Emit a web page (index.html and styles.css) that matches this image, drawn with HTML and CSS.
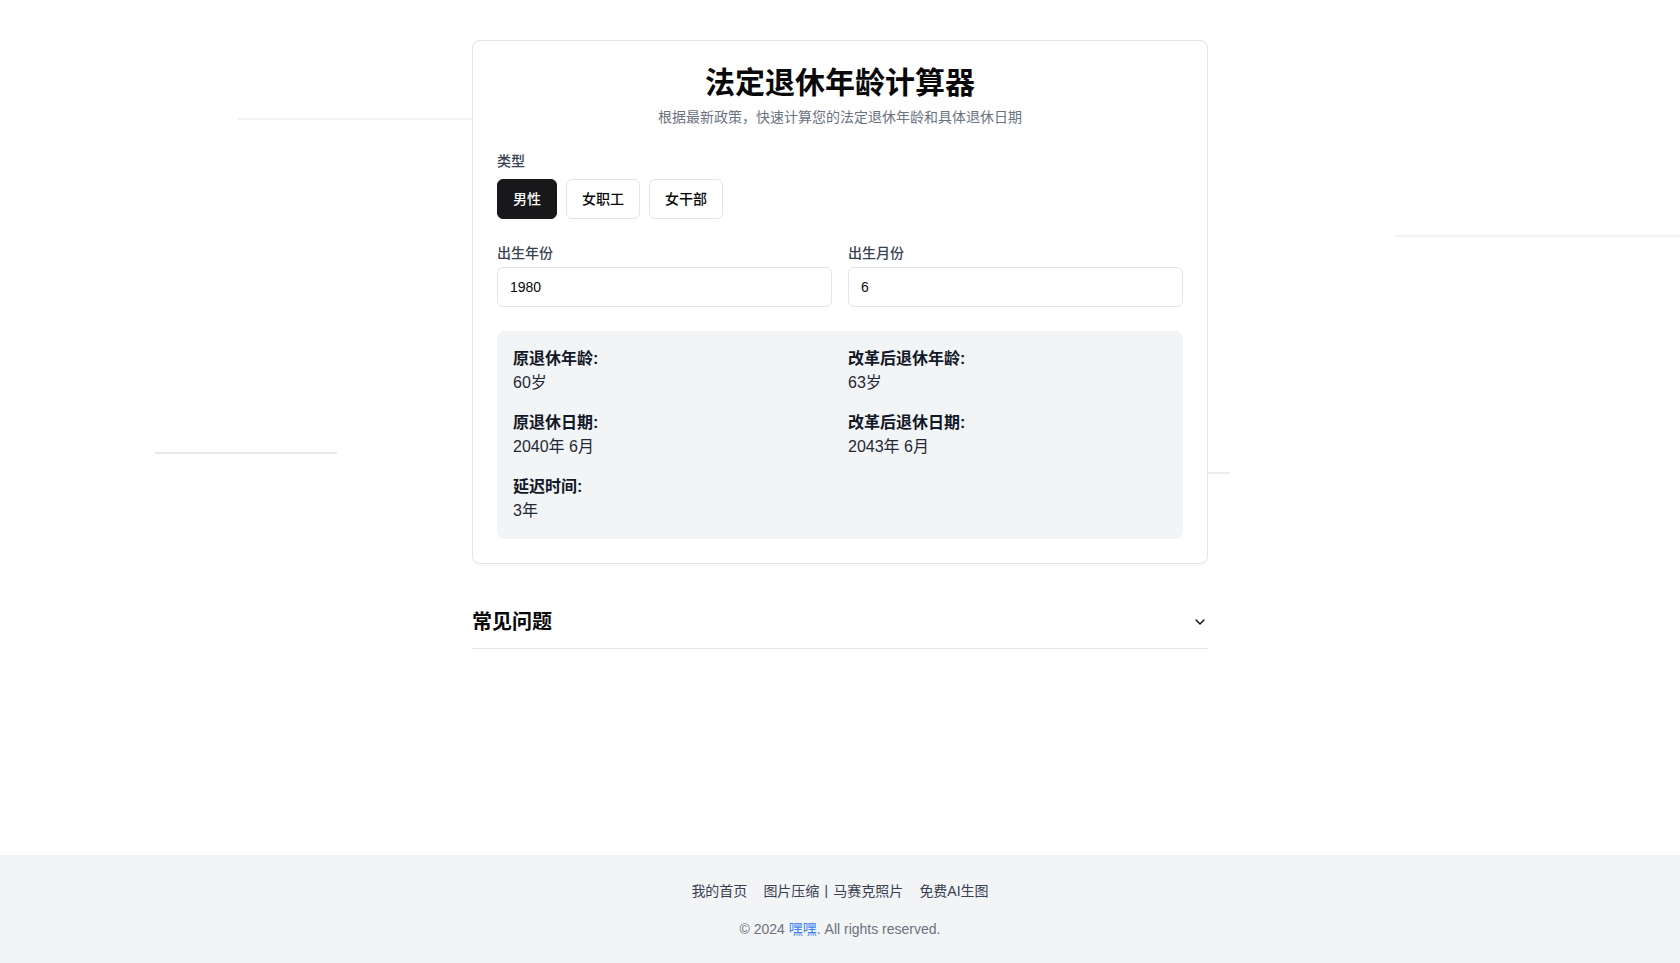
FILE: index.html
```html
<!DOCTYPE html>
<html lang="zh-CN">
<head>
<meta charset="utf-8">
<title>法定退休年龄计算器</title>
<link rel="stylesheet" href="styles.css">
</head>
<body>
<div class="bg-lines" aria-hidden="true">
  <span class="line l1"></span>
  <span class="line l2"></span>
  <span class="line l3"></span>
  <span class="line l4"></span>
</div>
<main class="main">
  <div class="container">
    <section class="card">
      <h1 class="title">法定退休年龄计算器</h1>
      <p class="subtitle">根据最新政策，快速计算您的法定退休年龄和具体退休日期</p>

      <div class="field type-field">
        <label class="label type-label">类型</label>
        <div class="btn-group">
          <button class="btn active">男性</button>
          <button class="btn">女职工</button>
          <button class="btn">女干部</button>
        </div>
      </div>

      <div class="field-row">
        <div class="field">
          <label class="label input-label">出生年份</label>
          <input class="input" type="text" value="1980">
        </div>
        <div class="field">
          <label class="label input-label">出生月份</label>
          <input class="input" type="text" value="6">
        </div>
      </div>

      <div class="result">
        <div class="result-item">
          <div class="r-label">原退休年龄:</div>
          <div class="r-value">60岁</div>
        </div>
        <div class="result-item">
          <div class="r-label">改革后退休年龄:</div>
          <div class="r-value">63岁</div>
        </div>
        <div class="result-item">
          <div class="r-label">原退休日期:</div>
          <div class="r-value">2040年 6月</div>
        </div>
        <div class="result-item">
          <div class="r-label">改革后退休日期:</div>
          <div class="r-value">2043年 6月</div>
        </div>
        <div class="result-item">
          <div class="r-label">延迟时间:</div>
          <div class="r-value">3年</div>
        </div>
      </div>
    </section>

    <section class="faq">
      <button class="faq-trigger">
        <span class="faq-title">常见问题</span>
        <svg class="chev" width="16" height="16" viewBox="0 0 24 24" fill="none" stroke="currentColor" stroke-width="2" stroke-linecap="round" stroke-linejoin="round"><path d="m6 9 6 6 6-6"/></svg>
      </button>
    </section>
  </div>
</main>
<footer class="footer">
  <nav class="footer-links">
    <a href="#">我的首页</a>
    <a href="#">图片压缩丨马赛克照片</a>
    <a href="#">免费AI生图</a>
  </nav>
  <p class="copy">© 2024 <a href="#" class="brand">嘿嘿</a>. All rights reserved.</p>
</footer>
</body>
</html>
```

FILE: styles.css
```css
* { box-sizing: border-box; }
html, body { margin: 0; padding: 0; }
body {
  font-family: "Liberation Sans", "Noto Sans CJK SC", sans-serif;
  color: #09090b;
  background: #ffffff;
  min-height: 100vh;
  display: flex;
  flex-direction: column;
  position: relative;
  overflow-x: hidden;
}
.bg-lines {
  position: absolute;
  inset: 0;
  pointer-events: none;
  z-index: 0;
}
.line {
  position: absolute;
  height: 2px;
  display: block;
}
.l1 { left: 237px; top: 118px; width: 300px; background: #f2f2f2; }
.l2 { left: 155px; top: 452px; width: 182px; background: #e8e8e8; }
.l3 { left: 1395px; top: 235px; width: 285px; background: #f4f4f4; }
.l4 { left: 1190px; top: 472px; width: 40px; background: #ececec; }

.main {
  flex: 1;
  position: relative;
  z-index: 1;
  padding-top: 40px;
}
.container {
  max-width: 768px;
  margin: 0 auto;
  padding: 0 16px;
}
.card {
  background: #fff;
  border: 1px solid #e4e4e7;
  border-radius: 8px;
  box-shadow: 0 1px 2px rgba(0,0,0,0.04);
  padding: 24px;
}
.title {
  margin: 0;
  text-align: center;
  font-size: 30px;
  line-height: 36px;
  font-weight: 700;
  color: #09090b;
}
.subtitle {
  margin: 6px 0 0;
  text-align: center;
  font-size: 14px;
  line-height: 20px;
  color: #6b7280;
}
.field { display: flex; flex-direction: column; }
.type-field { margin-top: 24px; }
.label {
  font-size: 14px;
  line-height: 20px;
  font-weight: 500;
  color: #374151;
}
.type-label { margin-bottom: 8px; }
.input-label { margin-bottom: 4px; }
.btn-group { display: flex; gap: 9px; }
.btn {
  height: 40px;
  padding: 0 15px;
  border: 1px solid #e4e4e7;
  border-radius: 6px;
  background: #fff;
  color: #09090b;
  font-family: inherit;
  font-size: 14px;
  font-weight: 500;
  line-height: 20px;
  cursor: pointer;
}
.btn.active {
  background: #18181b;
  border-color: #18181b;
  color: #fafafa;
}
.field-row {
  margin-top: 24px;
  display: grid;
  grid-template-columns: 1fr 1fr;
  gap: 16px;
}
.input {
  height: 40px;
  border: 1px solid #e4e4e7;
  border-radius: 6px;
  padding: 0 12px;
  font-family: inherit;
  font-size: 14px;
  color: #09090b;
  background: #fff;
  width: 100%;
}
.result {
  margin-top: 24px;
  background: #f3f4f6;
  border-radius: 8px;
  padding: 16px;
  display: grid;
  grid-template-columns: 1fr 1fr;
  column-gap: 16px;
  row-gap: 16px;
}
.r-label {
  font-size: 16px;
  line-height: 24px;
  font-weight: 700;
  color: #111827;
}
.r-value {
  font-size: 16px;
  line-height: 24px;
  color: #1f2937;
}
.faq {
  margin-top: 32px;
  border-bottom: 1px solid #e5e7eb;
}
.faq-trigger {
  width: 100%;
  display: flex;
  align-items: center;
  justify-content: space-between;
  padding: 12px 0;
  background: none;
  border: 0;
  font-family: inherit;
  cursor: pointer;
  color: #09090b;
}
.faq-title {
  font-size: 20px;
  line-height: 28px;
  font-weight: 700;
}
.chev { color: #09090b; flex-shrink: 0; }
.footer {
  position: relative;
  z-index: 1;
  background: #f3f4f6;
  padding: 24px 16px;
  text-align: center;
}
.footer-links {
  display: flex;
  justify-content: center;
  gap: 16px;
  font-size: 14px;
  line-height: 24px;
}
.footer-links a {
  color: #374151;
  text-decoration: none;
}
.copy {
  margin: 16px 0 0;
  font-size: 14px;
  line-height: 20px;
  color: #6b7280;
}
.brand { color: #3b82f6; text-decoration: none; }
```
